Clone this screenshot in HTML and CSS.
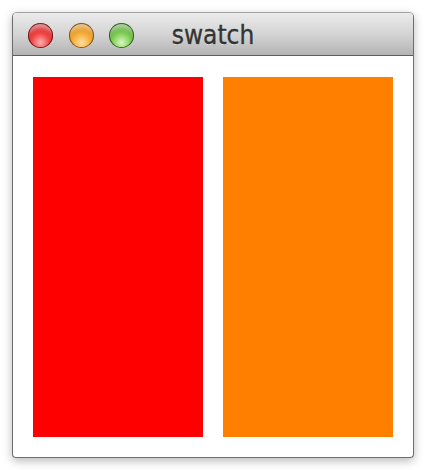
FILE: index.html
```html
<!DOCTYPE html>
<html>
<head>
<meta charset="utf-8">
<link rel="stylesheet" href="styles.css">
</head>
<body>
<div class="window">
  <div class="titlebar">
    <div class="lights">
      <span class="light red"></span>
      <span class="light yellow"></span>
      <span class="light green"></span>
    </div>
    <div class="title">swatch</div>
  </div>
  <div class="content">
    <div class="swatch swatch-red"></div>
    <div class="swatch swatch-orange"></div>
  </div>
</div>
</body>
</html>
```
FILE: styles.css
```css
html, body {
  margin: 0;
  padding: 0;
  background: #ffffff;
}
body {
  padding: 12px 12px;
  width: 426px;
  height: 470px;
  box-sizing: border-box;
}
.window {
  width: 402px;
  box-sizing: border-box;
  border: 1px solid #6e6e6e;
  border-top-color: #a2a2a2;
  border-radius: 5px 5px 4px 4px;
  box-shadow: 0 3px 10px rgba(0, 0, 0, 0.28);
  overflow: hidden;
  background: #ffffff;
}
.titlebar {
  position: relative;
  height: 42px;
  background: linear-gradient(#ebebeb, #d4d4d4 50%, #b4b4b4);
  border-bottom: 1px solid #5e5e5e;
  display: flex;
  align-items: center;
  justify-content: center;
}
.lights {
  position: absolute;
  left: 15px;
  top: 10px;
  display: flex;
  gap: 15.5px;
}
.light {
  width: 25px;
  height: 25px;
  border-radius: 50%;
  box-sizing: border-box;
  display: block;
}
.red {
  background: radial-gradient(circle at 50% 78%, #ffb0b0 0%, #f04848 38%, #d01c1c 72%, #6a0808 100%);
  box-shadow: inset 0 0 0 1px rgba(70, 5, 5, 0.75), inset 0 9px 4px -4px rgba(255, 255, 255, 0.55);
}
.yellow {
  background: radial-gradient(circle at 50% 78%, #ffe0a0 0%, #f6ae3c 38%, #d8860c 72%, #7a4c04 100%);
  box-shadow: inset 0 0 0 1px rgba(90, 55, 5, 0.75), inset 0 9px 4px -4px rgba(255, 255, 255, 0.55);
}
.green {
  background: radial-gradient(circle at 50% 78%, #d8f8c0 0%, #84d05a 38%, #50a430 72%, #245410 100%);
  box-shadow: inset 0 0 0 1px rgba(20, 60, 5, 0.75), inset 0 9px 4px -4px rgba(255, 255, 255, 0.55);
}
.title {
  font-family: "DejaVu Sans Condensed", "DejaVu Sans", sans-serif;
  font-size: 26px;
  color: #333333;
  -webkit-text-stroke: 0.35px #333333;
  text-shadow: 0 1px 0 rgba(255, 255, 255, 0.5);
  line-height: 1;
  margin-top: 1px;
}
.content {
  display: flex;
  gap: 20px;
  padding: 21px 20px 20px 20px;
}
.swatch {
  width: 170px;
  height: 360px;
}
.swatch-red {
  background: #ff0000;
}
.swatch-orange {
  background: #ff8000;
}
```
